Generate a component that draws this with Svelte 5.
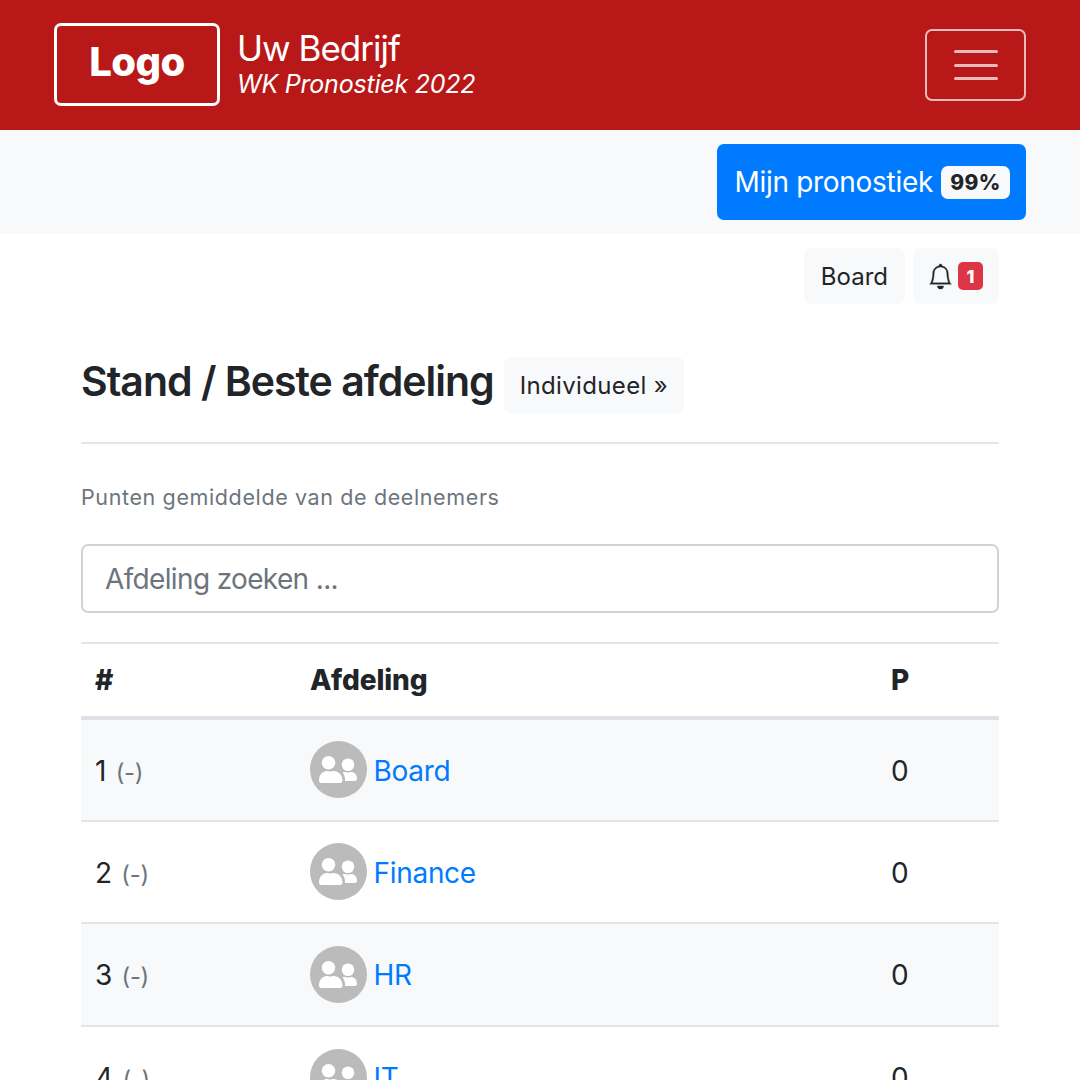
<script lang="ts">
	interface Row {
		pos: number;
		name: string;
		points: number;
	}

	const rows: Row[] = [
		{ pos: 1, name: 'Board', points: 0 },
		{ pos: 2, name: 'Finance', points: 0 },
		{ pos: 3, name: 'HR', points: 0 },
		{ pos: 4, name: 'IT', points: 0 }
	];
</script>

<div class="page">
	<header class="navbar">
		<div class="brand">
			<div class="logo"><span>Logo</span></div>
			<div class="brand-text">
				<div class="company">Uw Bedrijf</div>
				<div class="sub">WK Pronostiek 2022</div>
			</div>
		</div>
		<button class="toggler" aria-label="Menu">
			<svg width="44" height="30" viewBox="0 0 44 30">
				<path d="M1.500 1.500H42.500M1.500 15.500H42.500M1.500 28.500H42.500" stroke="rgba(255,255,255,.7)" stroke-width="3" stroke-linecap="round" />
			</svg>
		</button>
	</header>

	<div class="subbar">
		<a class="btn-primary" href="#top">Mijn pronostiek <span class="pct">99%</span></a>
	</div>

	<main class="container">
		<div class="tools">
			<button class="light">Board</button>
			<button class="light bell">
				<svg width="25" height="27" viewBox="0 0 16 16" fill="#212529">
					<path d="M8 16a2 2 0 0 0 2-2H6a2 2 0 0 0 2 2zM8 1.918l-.797.161A4.002 4.002 0 0 0 4 6c0 .628-.134 2.197-.459 3.742-.16.767-.376 1.566-.663 2.258h10.244c-.287-.692-.502-1.490-.663-2.258C12.134 8.197 12 6.628 12 6a4.002 4.002 0 0 0-3.203-3.920L8 1.917zM14.220 12c.223.447.481.801.780 1H1c.299-.199.557-.553.780-1C2.680 10.200 3 6.880 3 6c0-2.420 1.720-4.440 4.005-4.901a1 1 0 1 1 1.990 0A5.002 5.002 0 0 1 13 6c0 .880.320 4.200 1.220 6z" stroke="#212529" stroke-width="0.200" />
				</svg>
				<span class="count">1</span>
			</button>
		</div>

		<div class="title-row">
			<h1>Stand / Beste afdeling</h1>
			<button class="light individual">Individueel »</button>
		</div>
		<hr />

		<p class="hint">Punten gemiddelde van de deelnemers</p>

		<input class="search" type="text" placeholder="Afdeling zoeken ..." />

		<table>
			<thead>
				<tr>
					<th class="c-pos">#</th>
					<th class="c-name">Afdeling</th>
					<th class="c-pts">P</th>
				</tr>
			</thead>
			<tbody>
				{#each rows as r}
					<tr>
						<td class="pos">{r.pos} <small>(-)</small></td>
						<td>
							<div class="team">
								<span class="avatar">
									<svg width="38" height="27" viewBox="0 0 38 27" fill="#fff">
										<circle cx="9.500" cy="6.800" r="6.800" />
										<circle cx="29" cy="8.800" r="6.300" />
										<path d="M2.500 27C1 27 0 26 0 24.500 0 19 3.500 15 8 15c1 0 1.500.6 3 .6s2-.6 3.500-.6C19.500 15 23.500 19 23.500 24.500 23.500 26 22.500 27 21 27z" />
										<path d="M26 25c.2-3.500-.6-6.500-2.500-8.500.8-.4 1.500-.5 2.300-.5.8 0 1.500.5 3.200.5s2.400-.5 3.200-.5c3.500 0 5.800 3 5.800 6.500 0 1.500-.8 2.500-2 2.500z" />
									</svg>
								</span>
								<a href="#top">{r.name}</a>
							</div>
						</td>
						<td class="pts">{r.points}</td>
					</tr>
				{/each}
			</tbody>
		</table>
	</main>
</div>

<style>
	:global(body) {
		margin: 0;
		background: #fff;
	}

	.page {
		height: 1080px;
		overflow: hidden;
		font-family: Inter, "Liberation Sans", sans-serif;
		font-size: 28px;
		letter-spacing: -0.3px;
		color: #212529;
	}

	.navbar {
		height: 130px;
		box-sizing: border-box;
		background: #b91818;
		padding: 0 54px;
		display: flex;
		align-items: center;
		justify-content: space-between;
		color: #fff;
	}

	.brand {
		display: flex;
		align-items: center;
		gap: 17px;
		margin-top: -1px;
	}

	.logo {
		width: 166px;
		height: 83px;
		box-sizing: border-box;
		border: 3px solid #fff;
		border-radius: 7px;
		display: flex;
		align-items: center;
		justify-content: center;
		font-size: 40px;
		font-weight: 800;
		letter-spacing: -0.500px;
	}

	.logo span {
		margin-top: -6px;
	}

	.brand-text {
		margin-top: -2px;
	}

	.company {
		font-size: 35px;
		line-height: 41px;
		letter-spacing: -1px;
	}

	.sub {
		font-size: 25px;
		line-height: 30px;
		font-style: italic;
		letter-spacing: -0.220px;
	}

	.toggler {
		width: 101px;
		height: 72px;
		box-sizing: border-box;
		background: transparent;
		border: 2px solid rgba(255, 255, 255, 0.7);
		border-radius: 7px;
		padding: 0;
		display: flex;
		align-items: center;
		justify-content: center;
	}

	.subbar {
		height: 104px;
		box-sizing: border-box;
		background: #f8f9fa;
		padding: 14px 54px;
		display: flex;
		justify-content: flex-end;
	}

	.btn-primary {
		height: 76px;
		box-sizing: border-box;
		padding: 0 16px 0 17px;
		background: #007bff;
		color: #fff;
		border-radius: 7px;
		display: flex;
		align-items: center;
		gap: 8px;
		text-decoration: none;
	}

	.pct {
		background: #f8f9fa;
		color: #212529;
		border-radius: 7px;
		font-size: 21px;
		font-weight: 800;
		letter-spacing: 0.300px;
		height: 33px;
		width: 69px;
		display: flex;
		align-items: center;
		justify-content: center;
	}

	.container {
		padding: 14px 81px 0;
	}

	.tools {
		display: flex;
		justify-content: flex-end;
		gap: 8px;
	}

	.light {
		height: 56px;
		box-sizing: border-box;
		border: 0;
		background: #f8f9fa;
		border-radius: 7px;
		padding: 0 17px;
		font: inherit;
		font-size: 24px;
		letter-spacing: 0;
		color: #212529;
	}

	.individual {
		padding: 0 16px;
		letter-spacing: 0.350px;
	}

	.bell {
		display: flex;
		align-items: center;
		gap: 5px;
		width: 86px;
		padding: 0 0 0 15px;
	}

	.count {
		background: #dc3545;
		color: #fff;
		font-size: 18px;
		font-weight: 800;
		width: 25px;
		height: 28px;
		border-radius: 5px;
		display: flex;
		align-items: center;
		justify-content: center;
	}

	.title-row {
		display: flex;
		align-items: center;
		gap: 10px;
		margin-top: 53px;
	}

	h1 {
		margin: -8px 0 0;
		font-size: 41px;
		font-weight: 600;
		line-height: 48px;
		letter-spacing: -1px;
	}

	hr {
		border: 0;
		border-top: 2px solid #e4e6e8;
		margin: 29px 0 0;
	}

	.hint {
		margin: 41px 0 0;
		font-size: 21.500px;
		line-height: 24px;
		letter-spacing: 0.620px;
		color: #6c757d;
	}

	.search {
		display: block;
		width: 100%;
		height: 69px;
		box-sizing: border-box;
		margin-top: 35px;
		padding: 0 22px;
		border: 2px solid #ced4da;
		border-radius: 7px;
		font: inherit;
		letter-spacing: -0.650px;
		color: #495057;
	}

	.search::placeholder {
		color: #6c757d;
		opacity: 1;
	}

	table {
		width: 100%;
		margin-top: 29px;
		border-collapse: collapse;
		table-layout: fixed;
	}

	th, td {
		text-align: left;
		padding: 0 14px;
		border-top: 2px solid #e3e5e8;
	}

	th {
		height: 72px;
		font-weight: 800;
		letter-spacing: -0.100px;
		border-bottom: 4px solid #dee2e6;
	}

	td {
		height: 102.500px;
		box-sizing: border-box;
	}

	tbody tr:nth-child(odd) {
		background: #f8f9fa;
	}

	.c-pos { width: 187px; }
	.c-pts { width: 94px; }

	.pos, .pts {
		padding-top: 2px;
	}

	small {
		font-size: 85%;
		margin-left: 2px;
		color: #6c757d;
	}

	.team {
		display: flex;
		align-items: center;
		gap: 7px;
		margin-left: -0.500px;
	}

	.team a {
		margin-top: 2px;
	}

	.avatar {
		width: 57px;
		height: 57px;
		border-radius: 50%;
		background: #bbb;
		display: flex;
		align-items: center;
		justify-content: center;
	}

	a {
		color: #007bff;
		text-decoration: none;
	}
</style>
